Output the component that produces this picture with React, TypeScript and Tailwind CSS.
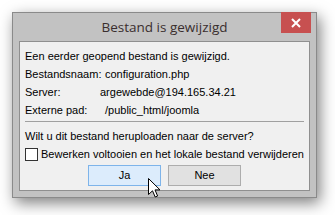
import React from 'react';

const Cursor = () => (
  <svg width="13" height="20" viewBox="0 0 13 20" className="absolute left-[148px] top-[178px]">
    <path d="M0.5 0.5 L0.5 16.5 L4.5 12.8 L7.2 19 L9.6 18 L7 11.9 L12 11.9 Z" fill="#fff" stroke="#000" strokeWidth="1" strokeLinejoin="miter" />
  </svg>
);

export default function App() {
  return (
    <div className="relative w-[335px] h-[215px] bg-white overflow-hidden font-['Liberation_Sans',Arial,sans-serif]">
      <div className="absolute left-[12px] top-[12px] w-[305px] h-[186px] flex flex-col border border-[#8a8a8a] bg-[#c2c2c2] shadow-[3px_5px_14px_rgba(0,0,0,0.5)]">
        {/* title bar */}
        <div className="relative h-[28px] shrink-0 flex items-center justify-center">
          <span className="text-[13.5px] text-[#3a2e2e] font-['Open_Sans',sans-serif] leading-none mt-[1px]">Bestand is gewijzigd</span>
          <div className="absolute right-[5px] top-[-1px] w-[30px] h-[21px] bg-[#c75050] flex items-center justify-center">
            <svg width="10" height="10" viewBox="0 0 10 10">
              <path d="M1 1 L9 9 M9 1 L1 9" stroke="#fff" strokeWidth="2" />
            </svg>
          </div>
        </div>
        {/* content */}
        <div className="mx-[6px] h-[150px] border border-[#8f8f8f] bg-[#f0f0f0] px-[5px] pt-[5px] text-[11px] text-black leading-[18px]">
          <div>Een eerder geopend bestand is gewijzigd.</div>
          <div className="flex">
            <span className="w-[75px]">Bestandsnaam:</span>
            <span className="pl-[5px]">configuration.php</span>
          </div>
          <div className="flex">
            <span className="w-[75px]">Server:</span>
            <span>argewebde@194.165.34.21</span>
          </div>
          <div className="flex">
            <span className="w-[75px]">Externe pad:</span>
            <span className="pl-[5px]">/public_html/joomla</span>
          </div>
          <div className="h-px bg-[#a0a0a0] mt-[2px] mb-[5px]" />
          <div>Wilt u dit bestand heruploaden naar de server?</div>
          <div className="flex items-center gap-[3px]">
            <span className="w-[13px] h-[13px] border border-[#333] bg-white shrink-0" />
            <span>Bewerken voltooien en het lokale bestand verwijderen</span>
          </div>
          <div className="flex justify-center gap-[7px] mt-[2px]">
            <button className="w-[73px] h-[21px] border border-[#7eb4ea] bg-[#dcecfc] text-[11px] leading-none">Ja</button>
            <button className="w-[73px] h-[21px] border border-[#adadad] bg-[#e1e1e1] text-[11px] leading-none">Nee</button>
          </div>
        </div>
      </div>
      <Cursor />
    </div>
  );
}
